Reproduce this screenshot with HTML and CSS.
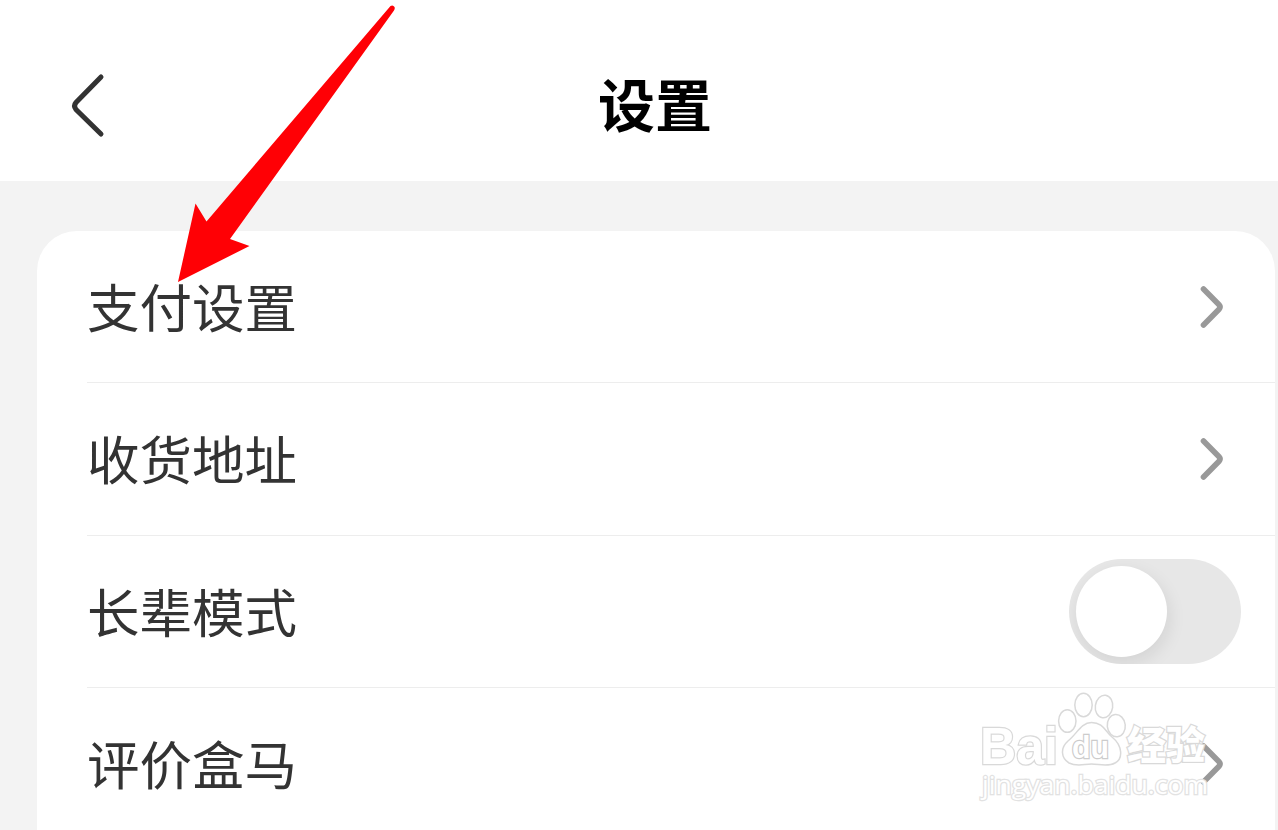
FILE: index.html
```html
<!DOCTYPE html>
<html lang="zh-CN">
<head>
  <meta charset="UTF-8" />
  <meta name="viewport" content="width=device-width, initial-scale=1.0"/>
  <title>设置</title>
  <link rel="stylesheet" href="styles.css">
</head>
<body>
  <header class="header">
    <svg class="back" viewBox="0 0 40 70" fill="none">
      <path d="M33 7 L8 32.500 Q5 36 8 39.500 L33 64" />
    </svg>
    <h1>设置</h1>
  </header>

  <main class="card">
    <div class="row">
      <span>支付设置</span>
      <svg class="chevron" viewBox="0 0 28 46" fill="none"><path d="M5.500 5 L21 20.700 Q23 23 21 25.300 L5.500 41" /></svg>
    </div>
    <div class="row">
      <span>收货地址</span>
      <svg class="chevron" viewBox="0 0 28 46" fill="none"><path d="M5.500 5 L21 20.700 Q23 23 21 25.300 L5.500 41" /></svg>
    </div>
    <div class="row">
      <span>长辈模式</span>
      <div class="switch"><div class="knob"></div></div>
    </div>
    <div class="row">
      <span>评价盒马</span>
      <svg class="chevron" viewBox="0 0 28 46" fill="none"><path d="M5.500 5 L21 20.700 Q23 23 21 25.300 L5.500 41" /></svg>
    </div>
  </main>

  <!-- red pointer -->
  <svg class="arrow" viewBox="0 0 250 300">
    <path d="M230.500 6 Q233 4.500 234.500 7 Q235.200 8.500 234 10.500 L70 239 L89.500 246 L18 282 L35.500 203.500 L46.500 221.500 Z" />
  </svg>

  <!-- watermark -->
  <svg class="watermark" viewBox="0 0 260 130">
    <text class="brand" x="20" y="83.500" textLength="78" lengthAdjust="spacingAndGlyphs">Bai</text>
    <ellipse cx="107.300" cy="41" rx="8.700" ry="11.300" />
    <ellipse cx="123.500" cy="25" rx="8.700" ry="11.700" />
    <ellipse cx="144" cy="26.500" rx="8.700" ry="11.300" transform="rotate(8 144 26.500)" />
    <ellipse cx="156.300" cy="45.700" rx="9" ry="11.200" transform="rotate(-6 156 46)" />
    <path d="M131.500 42.500 C143 42.500 145 51 152 57 C163 66 163 79 155 83 C148 87 139 84 131.500 84 C124 84 117 87 109 83 C101 78 100 68 108 61 C117 54 121 42.500 131.500 42.500 Z" />
    <text class="du" x="112" y="78" textLength="37" lengthAdjust="spacingAndGlyphs">du</text>
    <text class="cn" x="167" y="79" textLength="78" lengthAdjust="spacingAndGlyphs">经验</text>
    <text class="url" x="22" y="114" textLength="226" lengthAdjust="spacingAndGlyphs">jingyan.baidu.com</text>
  </svg>
</body>
</html>
```

FILE: styles.css
```css
* {
  box-sizing: border-box;
}

body {
  position: relative;
  width: 1278px;
  height: 830px;
  margin: 0;
  overflow: hidden;
  background: #f3f3f3;
  color: #333;
  font-family: "Noto Sans CJK SC", sans-serif;
}

.header {
  display: grid;
  grid-template-columns: 68px 40px 1094px 76px;
  align-items: center;
  height: 181px;
  padding-top: 29px;
  background: #fff;
}

.back {
  width: 40px;
  height: 70px;
  stroke: #333;
  stroke-width: 5;
  stroke-linecap: round;
  grid-column: 2;
}

h1 {
  margin: 0;
  padding-bottom: 7px;
  color: #000;
  font-size: 57px;
  font-weight: 700;
  line-height: 80px;
  text-align: center;
}

.card {
  height: 599px;
  margin: 50px 3px 0 37px;
  padding-left: 50px;
  background: #fff;
  border-radius: 40px 40px 0 0;
}

.row {
  display: flex;
  align-items: center;
  justify-content: space-between;
  height: 152.300px;
  padding-right: 49px;
  border-bottom: 1px solid #ededed;
}

.row:last-child {
  height: 142px;
  padding-top: 10px;
  border-bottom: none;
}

.row span {
  padding-bottom: 3px;
  font-size: 52.500px;
  line-height: 76px;
}

.chevron {
  width: 28px;
  height: 46px;
  stroke: #999;
  stroke-width: 5.600;
  stroke-linecap: round;
}

.switch {
  width: 172px;
  height: 105px;
  margin-right: -15px;
  padding: 7px;
  background: #e7e7e7;
  border-radius: 53px;
  overflow: hidden;
}

.knob {
  width: 91px;
  height: 91px;
  background: #fff;
  border-radius: 50%;
  box-shadow: 2px 6px 18px rgba(0, 0, 0, 0.09);
}

.arrow {
  position: absolute;
  left: 160px;
  top: 0;
  width: 250px;
  height: 300px;
  fill: #ff0005;
}

.watermark {
  position: absolute;
  left: 960px;
  top: 680px;
  width: 260px;
  height: 130px;
  fill: #fff;
  stroke: #d9d9d9;
  stroke-width: 1.500;
}

.watermark text {
  stroke-width: 2.500;
  paint-order: stroke;
}

.watermark .brand {
  font: bold 52px "Liberation Sans", sans-serif;
}

.watermark .du {
  font: bold 32px "Liberation Sans", sans-serif;
  stroke: #ccc;
}

.watermark .cn {
  font: 900 39px "Noto Sans CJK SC", sans-serif;
}

.watermark .url {
  font: 26px "Open Sans", sans-serif;
  stroke: #e2e2e2;
}
```
